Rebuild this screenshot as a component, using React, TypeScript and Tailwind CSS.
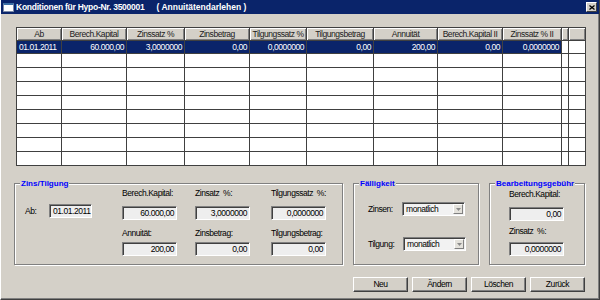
import React from "react";

const headers = [
  "Ab",
  "Berech.Kapital",
  "Zinssatz %",
  "Zinsbetrag",
  "Tilgungssatz %",
  "Tilgungsbetrag",
  "Annuität",
  "Berech.Kapital II",
  "Zinssatz % II",
  "",
  "",
];

const firstRow = [
  "01.01.2011",
  "60.000,00",
  "3,0000000",
  "0,00",
  "0,0000000",
  "0,00",
  "200,00",
  "0,00",
  "0,0000000",
];

function Field({ value, className }: { value: string; className: string }) {
  return (
    <div
      className={`h-[14px] bg-[#eeeeee] border border-t-[#808080] border-l-[#808080] border-b-white border-r-white shadow-[inset_1px_1px_0_#404040] flex items-center ${className}`}
    >
      {value}
    </div>
  );
}

function Select({ className }: { className: string }) {
  return (
    <div
      className={`w-[63px] h-[14px] bg-[#f2f2f2] border border-t-[#808080] border-l-[#808080] border-b-white border-r-white shadow-[inset_1px_1px_0_#404040] flex items-center ${className}`}
    >
      <span className="pl-[3px] flex-1">monatlich</span>
      <div className="w-[10px] h-[10px] mr-[1px] bg-[#e4e2dc] border border-t-white border-l-white border-b-[#808080] border-r-[#808080] flex items-center justify-center">
        <svg width="5" height="3" viewBox="0 0 5 3">
          <path d="M0 0H5L2.5 3Z" fill="#8a8a8a" />
        </svg>
      </div>
    </div>
  );
}

function Group({
  title,
  className,
  children,
}: {
  title: string;
  className: string;
  children: React.ReactNode;
}) {
  return (
    <div
      className={`relative h-[82px] border border-[#808080] shadow-[1px_1px_0_#fff,inset_1px_1px_0_#fff] ${className}`}
    >
      <span className="absolute -top-[6px] left-[5px] px-[1px] bg-[#d4d0c8] text-[#0000ff] font-bold text-[8px] tracking-normal leading-[11px] whitespace-nowrap">
        {title}
      </span>
      {children}
    </div>
  );
}

function Button({ label }: { label: string }) {
  return (
    <div className="w-[55px] h-[15px] bg-[#d4d0c8] border border-t-white border-l-white border-b-[#404040] border-r-[#404040] shadow-[inset_-1px_-1px_0_#808080] flex items-center justify-center">
      {label}
    </div>
  );
}

export default function App() {
  const rows = Array.from({ length: 8 });
  return (
    <div className="w-[600px] h-[300px] bg-[#d4d0c8] border-l border-l-white border-r border-b border-r-[#404040] border-b-[#404040] shadow-[inset_-1px_-1px_0_#808080] flex flex-col font-['Liberation_Sans',Arial,sans-serif] text-[8.5px] leading-[11px] tracking-[-0.45px] text-black overflow-hidden">
      {/* title bar */}
      <div className="h-[14px] shrink-0 bg-[#0a246a] flex items-center">
        <div className="ml-[2px] w-[11px] h-[9px] bg-white border border-[#7a8aa8] border-t-[2px] border-t-[#3a6ea5]" />
        <span className="ml-[2px] text-white font-bold tracking-[-0.25px] whitespace-nowrap">
          Konditionen für Hypo-Nr. 3500001
        </span>
        <span className="ml-[12px] text-white font-bold tracking-normal whitespace-pre">
          {"( Annuitätendarlehen )"}
        </span>
        <div className="ml-auto mr-[2px] w-[11px] h-[10px] bg-[#d4d0c8] border border-t-white border-l-white border-b-[#404040] border-r-[#404040] flex items-center justify-center">
          <svg width="6" height="5" viewBox="0 0 6 5">
            <path d="M0.5 0.5L5.5 4.5M5.5 0.5L0.5 4.5" stroke="#000" strokeWidth="1.3" />
          </svg>
        </div>
      </div>

      <div className="flex flex-col pl-[13px] pr-[14px] pt-[13px]">
        {/* grid */}
        <div className="ml-[2px] w-[570px] shrink-0 border-l border-t border-[#404040] grid grid-cols-[45px_65px_58px_65px_57px_67px_64px_65px_59px_7px_17px] bg-white">
          {headers.map((h, i) => (
            <div
              key={"h" + i}
              className="h-[13px] bg-[#d4d0c8] border-r border-b border-[#404040] shadow-[inset_1px_1px_0_#fff,inset_-1px_-1px_0_#808080] flex items-center justify-center text-[#202020] whitespace-nowrap overflow-hidden"
            >
              {h}
            </div>
          ))}
          {headers.map((_, i) =>
            i < 9 ? (
              <div
                key={"s" + i}
                className={`h-[13px] bg-[#0a246a] text-white border-r border-b border-[#404040] flex items-center whitespace-nowrap ${
                  i === 0 ? "justify-start pl-[2px]" : "justify-end pr-[2px]"
                }`}
              >
                {firstRow[i]}
              </div>
            ) : (
              <div key={"s" + i} className="h-[13px] bg-white border-r border-b border-[#404040]" />
            )
          )}
          {rows.map((_, r) =>
            headers.map((__, i) => (
              <div
                key={r + "-" + i}
                className="h-[14px] bg-white border-r border-b border-[#404040]"
              />
            ))
          )}
        </div>

        {/* group boxes */}
        <div className="mt-[17px] flex gap-[10px]">
          <Group title="Zins/Tilgung" className="w-[329px]">
            <div className="flex items-start pl-[10px]">
              <div className="w-[97px] mt-[20px] flex items-center">
                <span className="w-[24px]">Ab:</span>
                <Field value="01.01.2011" className="w-[43px] justify-start pl-[3px]" />
              </div>
              <div className="w-[55px] flex flex-col pt-[4px]">
                <span className="whitespace-nowrap">Berech.Kapital:</span>
                <Field value="60.000,00" className="mt-[7px] justify-end pr-[2px]" />
                <span className="mt-[8px] whitespace-nowrap">Annuität:</span>
                <Field value="200,00" className="mt-[3px] justify-end pr-[2px]" />
              </div>
              <div className="w-[55px] ml-[18px] flex flex-col pt-[4px]">
                <span className="whitespace-pre">{"Zinsatz  %:"}</span>
                <Field value="3,0000000" className="mt-[7px] justify-end pr-[2px]" />
                <span className="mt-[8px] whitespace-nowrap">Zinsbetrag:</span>
                <Field value="0,00" className="mt-[3px] justify-end pr-[2px]" />
              </div>
              <div className="w-[55px] ml-[21px] flex flex-col pt-[4px]">
                <span className="whitespace-pre">{"Tilgungssatz  %:"}</span>
                <Field value="0,0000000" className="mt-[7px] justify-end pr-[2px]" />
                <span className="mt-[8px] whitespace-nowrap">Tilgungsbetrag:</span>
                <Field value="0,00" className="mt-[3px] justify-end pr-[2px]" />
              </div>
            </div>
          </Group>

          <Group title="Fälligkeit" className="w-[126px]">
            <div className="flex flex-col pl-[14px] pt-[18px]">
              <div className="flex items-center">
                <span className="w-[34px]">Zinsen:</span>
                <Select className="" />
              </div>
              <div className="mt-[21px] flex items-center">
                <span className="w-[35px]">Tilgung:</span>
                <Select className="" />
              </div>
            </div>
          </Group>

          <Group title="Bearbeitungsgebühr" className="w-[96px]">
            <div className="flex flex-col pl-[19px] pt-[5px] w-[74px]">
              <span className="whitespace-nowrap">Berech.Kapital:</span>
              <Field value="0,00" className="mt-[7px] w-[55px] justify-end pr-[2px]" />
              <span className="mt-[5px] whitespace-pre">{"Zinsatz  %:"}</span>
              <Field value="0,0000000" className="mt-[5px] w-[55px] justify-end pr-[2px]" />
            </div>
          </Group>
        </div>

        {/* buttons */}
        <div className="mt-[12px] flex justify-end gap-[4px]">
          <Button label="Neu" />
          <Button label="Ändern" />
          <Button label="Löschen" />
          <Button label="Zurück" />
        </div>
      </div>
    </div>
  );
}
